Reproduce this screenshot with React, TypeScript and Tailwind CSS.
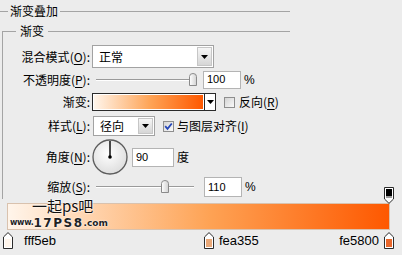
import React from 'react';

const Key = ({ k }: { k: string }) => (
  <span className="underline underline-offset-[2px] decoration-[1px]">{k}</span>
);

const Label = ({ text, k }: { text: string; k?: string }) => (
  <div className="w-[86px] shrink-0 text-right whitespace-nowrap leading-[14px]">
    {text}
    {k && (
      <>
        (<Key k={k} />)
      </>
    )}
    :
  </div>
);

const DownTri = () => (
  <svg width="7" height="4" viewBox="0 0 7 4">
    <polygon points="0,0 7,0 3.5,4" fill="#000" />
  </svg>
);

const Select = ({ value, box }: { value: string; box: string }) => (
  <div className={`${box} flex border border-[#a2a2a2] bg-white`}>
    <div className="flex-1 pl-[6px] flex items-center leading-[14px]">{value}</div>
    <div className="w-[15px] m-[1px] flex items-center justify-center border border-[#c6c6c6] bg-gradient-to-b from-[#f6f6f6] to-[#d6d6d6]">
      <DownTri />
    </div>
  </div>
);

const Input = ({ value, box }: { value: string; box: string }) => (
  <div
    className={`${box} flex items-center pl-[3px] bg-white border border-[#b4b4b4] text-[11px] font-['Liberation_Sans',Arial,sans-serif]`}
  >
    {value}
  </div>
);

const Thumb = () => (
  <svg width="8" height="13" viewBox="0 0 8 13">
    <defs>
      <linearGradient id="th" x1="0" y1="0" x2="1" y2="0">
        <stop offset="0" stopColor="#ffffff" />
        <stop offset="1" stopColor="#d2d2d2" />
      </linearGradient>
    </defs>
    <path d="M0.5,3.5 Q0.5,0.5 4,0.5 Q7.5,0.5 7.5,3.5 L7.5,12.5 L0.5,12.5 Z" fill="url(#th)" stroke="#8a8a8a" />
  </svg>
);

const Slider = ({ pos }: { pos: string }) => (
  <div className="relative w-[106px] h-[14px] shrink-0">
    <div className="absolute left-[4px] right-[4px] top-[6px] h-[2px] border-t border-[#9a9a9a] border-b border-b-white" />
    <div className={`absolute top-0 ${pos}`}>
      <Thumb />
    </div>
  </div>
);

const CheckBox = ({ checked }: { checked?: boolean }) => (
  <div className="w-[11px] h-[11px] shrink-0 border border-[#8e8e8e] bg-gradient-to-br from-[#d4d4d4] to-[#fafafa] flex items-center justify-center">
    {checked && (
      <svg width="9" height="9" viewBox="0 0 9 9">
        <path d="M1.2,4.2 L3.5,6.8 L7.8,1.5" fill="none" stroke="#2446b8" strokeWidth="1.8" />
      </svg>
    )}
  </div>
);

const Dial = () => (
  <svg width="36" height="36" viewBox="0 0 36 36">
    <defs>
      <radialGradient id="dial" cx="0.45" cy="0.4" r="0.6">
        <stop offset="0" stopColor="#ffffff" />
        <stop offset="1" stopColor="#dedede" />
      </radialGradient>
    </defs>
    <circle cx="18" cy="18" r="17" fill="url(#dial)" stroke="#5c5c5c" strokeWidth="1.3" />
    <line x1="18" y1="18" x2="18" y2="2" stroke="#000" strokeWidth="1.4" />
    <circle cx="18" cy="18" r="1.8" fill="#000" />
  </svg>
);

const StopUp = ({ color }: { color: string }) => (
  <svg width="10" height="17" viewBox="0 0 10 17">
    <path d="M5,0.6 L9.5,5 L9.5,16.5 L0.5,16.5 L0.5,5 Z" fill="#fff" stroke="#2b2b2b" />
    <rect x="2" y="7" width="6" height="8" fill={color} />
  </svg>
);

const StopDown = () => (
  <svg width="10" height="17" viewBox="0 0 10 17">
    <path d="M0.5,0.5 L9.5,0.5 L9.5,12 L5,16.4 L0.5,12 Z" fill="#fff" stroke="#2b2b2b" />
    <rect x="2" y="2" width="6" height="7" fill="#000" />
    <rect x="2" y="9" width="6" height="2" fill="#9a9a9a" />
  </svg>
);

const App = () => {
  return (
    <div className="w-[402px] h-[255px] overflow-hidden bg-[#ececec] text-black text-[12px] font-['Noto_Sans_CJK_SC',sans-serif] pt-[3px]">
      {/* 渐变叠加 header */}
      <div className="flex items-center h-[16px] w-[290px]">
        <div className="w-[8px] border-t border-[#a4a4a4]" />
        <span className="px-[2px] leading-[16px]">渐变叠加</span>
        <div className="flex-1 border-t border-[#a4a4a4]" />
      </div>

      {/* 渐变 group */}
      <div className="ml-[2px] mt-[5px] w-[288px]">
        <div className="flex h-[14px]">
          <div className="w-[14px] mt-[7px] border-l border-t border-[#a4a4a4]" />
          <span className="px-[4px] leading-[14px]">渐变</span>
          <div className="flex-1 self-center border-t border-[#a4a4a4]" />
        </div>

        <div className="border-l border-[#a4a4a4] pt-[7px] pl-[1px]">
          <div className="flex items-center h-[23px]">
            <Label text="混合模式" k="O" />
            <div className="ml-[2px]">
              <Select value="正常" box="w-[122px] h-[23px]" />
            </div>
          </div>

          <div className="flex items-center h-[23px]">
            <Label text="不透明度" k="P" />
            <div className="ml-[2px] flex items-center">
              <Slider pos="left-[97px]" />
              <Input value="100" box="ml-[5px] w-[38px] h-[18px]" />
              <span className="ml-[3px] font-['Liberation_Sans',Arial,sans-serif]">%</span>
            </div>
          </div>

          <div className="flex items-center h-[22px]">
            <Label text="渐变" />
            <div className="ml-[2px] flex items-center">
              <div className="w-[124px] h-[18px] flex border border-[#2a2a2a] bg-white">
                <div className="flex-1 m-[1px] bg-[linear-gradient(to_right,#fff5eb_0%,#fea355_52%,#fe5800_100%)]" />
                <div className="w-[11px] border-l border-[#2a2a2a] flex items-center justify-center">
                  <DownTri />
                </div>
              </div>
              <div className="ml-[8px]">
                <CheckBox />
              </div>
              <span className="ml-[4px] leading-[14px]">
                反向(<Key k="R" />)
              </span>
            </div>
          </div>

          <div className="flex items-center h-[26px]">
            <Label text="样式" k="L" />
            <div className="ml-[3px] flex items-center">
              <Select value="径向" box="w-[62px] h-[20px]" />
              <div className="ml-[8px]">
                <CheckBox checked />
              </div>
              <span className="ml-[3px] leading-[14px]">
                与图层对齐(<Key k="I" />)
              </span>
            </div>
          </div>

          <div className="flex items-center h-[36px]">
            <Label text="角度" k="N" />
            <div className="ml-[2px] flex items-center">
              <Dial />
              <Input value="90" box="ml-[4px] w-[42px] h-[19px]" />
              <span className="ml-[3px] leading-[14px]">度</span>
            </div>
          </div>

          <div className="flex items-center h-[24px]">
            <Label text="缩放" k="S" />
            <div className="ml-[2px] flex items-center">
              <Slider pos="left-[69px]" />
              <Input value="110" box="ml-[6px] w-[38px] h-[20px]" />
              <span className="ml-[3px] font-['Liberation_Sans',Arial,sans-serif]">%</span>
            </div>
          </div>
        </div>
      </div>

      {/* gradient editor */}
      <div className="relative ml-[7px] mt-[4px] w-[383px]">
        <div className="absolute top-[-16px] left-[377px]">
          <StopDown />
        </div>
        <div className="h-[27px] border border-[#d9c2ae] bg-[linear-gradient(to_right,#fff5eb_0%,#fea355_52.6%,#fe5800_100%)]" />

        <div className="absolute left-[25px] top-[-5px] text-[15px] leading-[15px] text-[#111] [text-shadow:0_0_2px_#fff,0_0_2px_#fff]">
          一起ps吧
        </div>
        <div className="absolute left-[3px] top-[15px] flex items-end leading-[10px] font-bold text-[#222] font-['DejaVu_Sans',sans-serif] [text-shadow:0_0_1px_#fff,0_0_2px_#fff]">
          <span className="text-[8px] tracking-[-0.3px]">www.</span>
          <span className="text-[12px] tracking-[1.5px]">17PS8</span>
          <span className="text-[9px]">.com</span>
        </div>

        <div className="relative h-[22px] text-[13px] font-['Liberation_Sans',Arial,sans-serif]">
          <div className="absolute left-[-4px] top-[2px]">
            <StopUp color="#fff5eb" />
          </div>
          <span className="absolute left-[17px] top-[3px] leading-[15px]">fff5eb</span>

          <div className="absolute left-[197px] top-[2px]">
            <StopUp color="#e9a878" />
          </div>
          <span className="absolute left-[212px] top-[3px] leading-[15px]">fea355</span>

          <span className="absolute right-[11px] top-[3px] leading-[15px]">fe5800</span>
          <div className="absolute left-[377px] top-[2px]">
            <StopUp color="#e8662a" />
          </div>
        </div>
      </div>
    </div>
  );
};

export default App;
